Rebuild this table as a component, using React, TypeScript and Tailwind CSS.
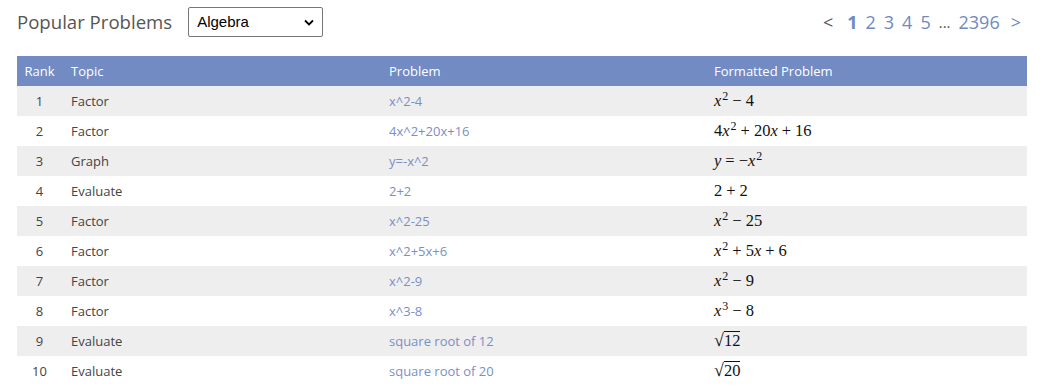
import React from "react";

const M = ({ children }: { children: React.ReactNode }) => (
  <span className="text-[16.5px] text-[#111]" style={{ fontFamily: '"Liberation Serif", "DejaVu Serif", serif' }}>{children}</span>
);
const V = ({ children }: { children: React.ReactNode }) => <i>{children}</i>;
const Sup = ({ children }: { children: React.ReactNode }) => <span className="text-[12px] relative -top-[6px] ml-[1px]">{children}</span>;
const Op = ({ children }: { children: React.ReactNode }) => <span className="mx-[4px]">{children}</span>;
const Sqrt = ({ children }: { children: React.ReactNode }) => (
  <span className="inline-flex items-end">
    <span className="text-[18px] leading-none">√</span>
    <span className="border-t border-[#111] leading-[17px]">{children}</span>
  </span>
);

const rows: [string, string, string, React.ReactNode][] = [
  ["1", "Factor", "x^2-4", <><V>x</V><Sup>2</Sup><Op>−</Op>4</>],
  ["2", "Factor", "4x^2+20x+16", <>4<V>x</V><Sup>2</Sup><Op>+</Op>20<V>x</V><Op>+</Op>16</>],
  ["3", "Graph", "y=-x^2", <><V>y</V><Op>=</Op>−<V>x</V><Sup>2</Sup></>],
  ["4", "Evaluate", "2+2", <>2<Op>+</Op>2</>],
  ["5", "Factor", "x^2-25", <><V>x</V><Sup>2</Sup><Op>−</Op>25</>],
  ["6", "Factor", "x^2+5x+6", <><V>x</V><Sup>2</Sup><Op>+</Op>5<V>x</V><Op>+</Op>6</>],
  ["7", "Factor", "x^2-9", <><V>x</V><Sup>2</Sup><Op>−</Op>9</>],
  ["8", "Factor", "x^3-8", <><V>x</V><Sup>3</Sup><Op>−</Op>8</>],
  ["9", "Evaluate", "square root of 12", <Sqrt>12</Sqrt>],
  ["10", "Evaluate", "square root of 20", <Sqrt>20</Sqrt>],
];

export default function App() {
  return (
    <div className="w-[1050px] h-[386px] bg-white overflow-hidden" style={{ fontFamily: '"Open Sans", "Noto Sans", sans-serif' }}>
      <div className="flex items-center justify-between pl-[17px] pr-[29px] h-[44px]">
        <div className="flex items-center">
          <span className="text-[18.6px] text-[#555]">Popular Problems</span>
          <div className="ml-[16px] w-[135px] h-[30px] border border-[#767676] rounded-[2px] flex items-center justify-between pl-[8px] pr-[8px] text-[15px] text-black" style={{ fontFamily: '"Liberation Sans", Arial, sans-serif' }}>
            <span>Algebra</span>
            <svg width="10" height="7" viewBox="0 0 10 7"><path d="M1 1.5 L5 5.5 L9 1.5" stroke="#000" strokeWidth="1.8" fill="none" /></svg>
          </div>
        </div>
        <div className="flex items-center gap-[8px] text-[18px] text-[#7089c0]">
          <span className="text-[#555] mr-[6px]">&lt;</span>
          <span className="font-bold">1</span>
          <span>2</span>
          <span>3</span>
          <span>4</span>
          <span>5</span>
          <span className="text-[#555] text-[15px]">...</span>
          <span>2396</span>
          <span className="ml-[3px]">&gt;</span>
        </div>
      </div>
      <div className="ml-[17px] w-[1010px] mt-[12px] text-[13px]">
        <div className="grid grid-cols-[45px_318px_325px_1fr] h-[30px] items-center bg-[#728bc2] text-white pt-[2px]">
          <div className="text-center">Rank</div>
          <div className="pl-[9px]">Topic</div>
          <div className="pl-[9px]">Problem</div>
          <div className="pl-[9px]">Formatted Problem</div>
        </div>
        {rows.map((r, i) => (
          <div key={i} className={`grid grid-cols-[45px_318px_325px_1fr] h-[30px] items-center ${i % 2 === 0 ? "bg-[#eeeeee]" : "bg-white"}`}>
            <div className="text-center text-[#444] pt-[2px]">{r[0]}</div>
            <div className="pl-[9px] text-[#444] pt-[2px]">{r[1]}</div>
            <div className="pl-[9px] text-[#7a8fc6] pt-[2px]">{r[2]}</div>
            <div className="pl-[9px]"><M>{r[3]}</M></div>
          </div>
        ))}
      </div>
    </div>
  );
}
